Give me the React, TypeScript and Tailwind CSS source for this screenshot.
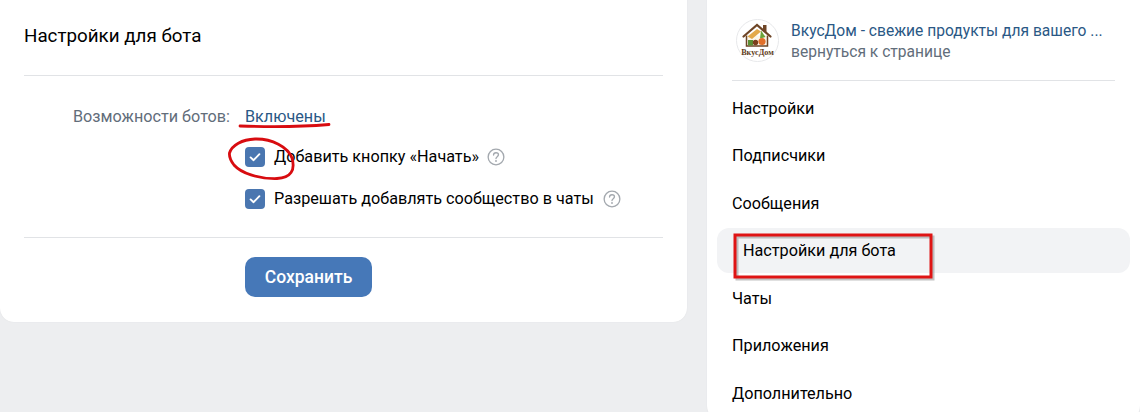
import React from "react";

const Check = () => (
  <span className="flex h-5 w-5 shrink-0 items-center justify-center rounded-[4px] bg-[#4a76b0]">
    <svg width="14" height="14" viewBox="0 0 14 14" fill="none">
      <path d="M2.6 7.4 5.6 10.2 11.4 4.2" stroke="#fff" strokeWidth="1.9" strokeLinecap="round" strokeLinejoin="round" />
    </svg>
  </span>
);

const Help = () => (
  <svg width="18" height="18" viewBox="0 0 19 19" fill="none" className="shrink-0">
    <circle cx="9.5" cy="9.5" r="8.3" stroke="#a3a8ae" strokeWidth="1.4" />
    <path d="M6.9 7.4c0-1.5 1.1-2.4 2.6-2.4s2.6.9 2.6 2.2c0 1.9-2.6 2-2.6 3.9" stroke="#a3a8ae" strokeWidth="1.4" strokeLinecap="round" />
    <circle cx="9.5" cy="13.7" r=".95" fill="#a3a8ae" />
  </svg>
);

const Logo = () => (
  <svg width="43" height="43" viewBox="0 0 43 43" className="shrink-0">
    <circle cx="21.5" cy="21.5" r="21" fill="#fff" stroke="#e7e8ea" />
    <path d="M7.5 17.5 21 6 34.5 17.5" fill="none" stroke="#6e4526" strokeWidth="2.2" strokeLinecap="round" />
    <path d="M27 6h3.5v7.5L27 10.5z" fill="#6e4526" />
    <path d="M10.5 16.5v10.5h21V16.5" fill="#fbf6ea" stroke="#6e4526" strokeWidth="1.5" />
    <path d="M11.5 17.5 21 10l4 2.5-9 7.5z" fill="#e3a94a" />
    <path d="M25 11.5l4.5 6.5-5.5 1.5z" fill="#6aa339" />
    <path d="M12 21h5v5.5h-5z" fill="#5b8f34" />
    <circle cx="19.5" cy="23.5" r="2.7" fill="#7a3f1c" />
    <circle cx="26" cy="22.5" r="3.6" fill="#e2702a" />
    <text x="21.5" y="35.5" textAnchor="middle" fontSize="8.2" fontWeight="700" fill="#5f3d22" fontFamily="'Liberation Serif', serif">ВкусДом</text>
  </svg>
);

const nav = ["Настройки", "Подписчики", "Сообщения", "Настройки для бота", "Чаты", "Приложения", "Дополнительно"];

export default function App() {
  return (
    <div className="relative h-[412px] w-[1140px] overflow-hidden bg-[#edeef0] font-['Roboto',sans-serif] text-[16.2px] text-black">
      <div className="flex h-full items-start gap-5">
        <main className="mt-[-20px] h-[342px] w-[687px] shrink-0 rounded-[14px] bg-white pt-5 shadow-[0_0_1px_#d7d8db]">
          <div className="mx-6 flex h-[76px] items-center border-b border-[#e1e3e6] pb-[2px] text-[18.8px]">Настройки для бота</div>
          <div className="mx-6 flex h-[162px] flex-col border-b border-[#e1e3e6] pl-6 pt-[31px]">
            <div className="flex h-5 items-center">
              <span className="w-[182px] whitespace-nowrap text-right text-[#626d7a]">Возможности ботов:</span>
              <span className="ml-[15px] text-[#2a5885]">Включены</span>
            </div>
            <div className="ml-[197px] mt-[20px] flex h-5 items-center gap-[9px]">
              <Check />
              <span>Добавить кнопку «Начать»</span>
              <span className="ml-[-1px]"><Help /></span>
            </div>
            <div className="ml-[197px] mt-[22px] flex h-5 items-center gap-[9px]">
              <Check />
              <span>Разрешать добавлять сообщество в чаты</span>
              <span><Help /></span>
            </div>
          </div>
          <div className="ml-[245px] mt-[19px]">
            <button className="h-10 w-[127px] rounded-[10px] bg-[#4678b8] text-[17.5px] font-medium text-white">Сохранить</button>
          </div>
        </main>
        <aside className="mt-[-20px] h-[440px] w-[433px] shrink-0 rounded-[14px] bg-white pt-5 shadow-[0_0_1px_#d7d8db]">
          <div className="mx-[25px] flex h-[81px] items-center gap-3 border-b border-[#e1e3e6] pl-1 pt-[1px]">
            <Logo />
            <div className="min-w-0 pt-[2px] text-[15.6px] leading-[21px]">
              <div className="whitespace-nowrap text-[#2a5885]">ВкусДом - свежие продукты для вашего ...</div>
              <div className="text-[#626d7a]">вернуться к странице</div>
            </div>
          </div>
          <nav className="mx-[10px] mt-[4px] flex flex-col">
            {nav.map((n, i) => (
              <div
                key={n}
                className={
                  i === 3
                    ? "mb-[2px] mt-[0.5px] flex h-[45px] items-center rounded-[12px] bg-[#f2f3f5] pl-[26px] pt-[1px]"
                    : "flex h-[47.5px] items-center pl-[15px]"
                }
              >
                {n}
              </div>
            ))}
          </nav>
        </aside>
      </div>
      <svg className="pointer-events-none absolute left-0 top-0" width="1140" height="412" fill="none">
        <path d="M240 126C268 127 300 127 329 124.5" stroke="#d80c10" strokeWidth="2.8" strokeLinecap="round" />
        <path d="M229.5 153C232 145 242 139.5 255 139C272 138.5 288 147 292 158C295.5 170 291 178 277 178.5C258 179 241 173 234 165C231 161 229 157 229.5 153Z" stroke="#d80c10" strokeWidth="2.8" strokeLinejoin="round" />
        <rect x="735" y="235" width="196" height="42" stroke="#8f8f8f" strokeWidth="3" opacity=".55" transform="translate(2 2)" />
        <rect x="735" y="235" width="196" height="42" stroke="#df1414" strokeWidth="3" />
      </svg>
    </div>
  );
}
